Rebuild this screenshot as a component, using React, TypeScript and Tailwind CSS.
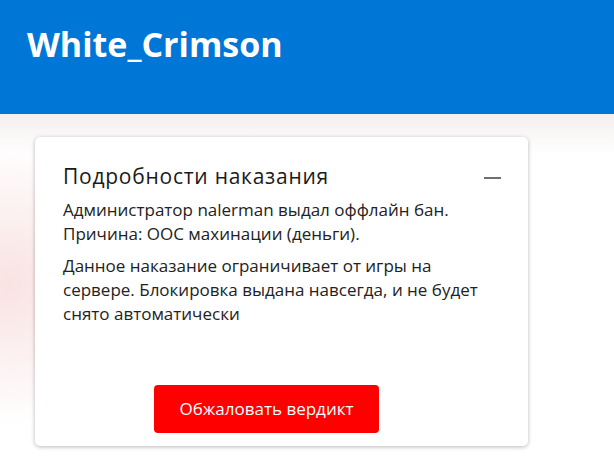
import React from 'react';

function App() {
  return (
    <div className="min-h-[468px] w-full bg-white font-['Open_Sans',sans-serif] text-[#222]">
      {/* Header */}
      <div className="h-[114px] bg-[#0077d6] pl-[27px] pt-[22px]">
        <h1 className="text-[34px] font-bold leading-[44px] text-white">White_Crimson</h1>
      </div>

      {/* Body with faint backdrop */}
      <div className="h-[354px] pt-[23px] pl-[35px] bg-[radial-gradient(ellipse_150px_190px_at_10px_170px,rgba(225,110,110,0.2),transparent_75%),linear-gradient(180deg,rgba(235,225,225,0.55)_0px,transparent_40px)]">
        <div className="flex h-[309px] w-[493px] flex-col rounded-[5px] bg-white px-[28px] pt-[23px] shadow-[0_1px_4px_rgba(0,0,0,0.28)]">
          <div className="flex items-center justify-between">
            <h2 className="text-[21px] font-normal leading-[32px] tracking-[0.75px] text-[#1a1a1a]">
              Подробности наказания
            </h2>
            <div className="mr-[-1px] mt-[4px] h-[2px] w-[17px] bg-[#6f6f6f]" />
          </div>
          <p className="mt-[6px] text-[17px] leading-[24px]">
            Администратор nalerman выдал оффлайн бан.
            <br />
            Причина: OOC махинации (деньги).
          </p>
          <p className="mt-[8px] text-[17px] leading-[24px]">
            Данное наказание ограничивает от игры на
            <br />
            сервере. Блокировка выдана навсегда, и не будет
            <br />
            снято автоматически
          </p>
          <button className="ml-[91px] mt-[59px] h-[48px] w-[225px] shrink-0 rounded-[4px] bg-[#ff0000] text-[17px] text-white">
            Обжаловать вердикт
          </button>
        </div>
      </div>
    </div>
  );
}

export default App;
